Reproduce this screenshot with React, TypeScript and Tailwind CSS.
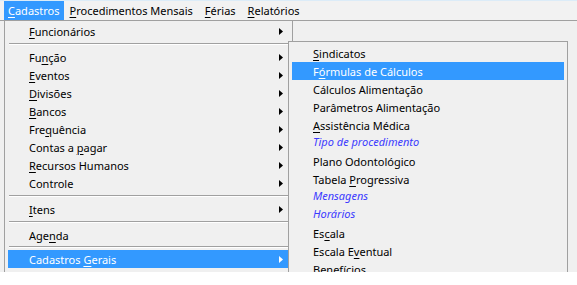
import React from "react";

type Item = {
  label: React.ReactNode;
  sub?: boolean;
  sep?: string;
  active?: boolean;
  italic?: boolean;
};

const font = { fontFamily: '"Noto Sans", "DejaVu Sans", sans-serif' };

function U({ children }: { children: React.ReactNode }) {
  return <span className="underline underline-offset-2">{children}</span>;
}

function Arrow({ white }: { white?: boolean }) {
  return (
    <svg width="4" height="7" viewBox="0 0 4 7" className="ml-auto">
      <path d="M0 0 L4 3.5 L0 7 Z" fill={white ? "#ffffff" : "#000000"} />
    </svg>
  );
}

const mainItems: Item[] = [
  { label: <><U>F</U>uncionários</>, sub: true },
  { sep: "h-[8px]", label: null },
  { label: <>Fu<U>n</U>ção</>, sub: true },
  { label: <><U>E</U>ventos</>, sub: true },
  { label: <><U>D</U>ivisões</>, sub: true },
  { label: <><U>B</U>ancos</>, sub: true },
  { label: <>Fre<U>q</U>uência</>, sub: true },
  { label: <>Contas a <U>p</U>agar</>, sub: true },
  { label: <><U>R</U>ecursos Humanos</>, sub: true },
  { label: <>Controle</>, sub: true },
  { sep: "h-[8px]", label: null },
  { label: <><U>I</U>tens</>, sub: true },
  { sep: "h-[8px]", label: null },
  { label: <>Age<U>n</U>da</> },
  { sep: "h-[6px]", label: null },
  { label: <>Cadastros <U>G</U>erais</>, sub: true, active: true },
];

const subItems: Item[] = [
  { label: <><U>S</U>indicatos</> },
  { label: <>F<U>ó</U>rmulas de Cálculos</>, active: true },
  { label: <>Cálculos Alimentação</> },
  { label: <>Parâmetros Alimentação</> },
  { label: <><U>A</U>ssistência Médica</> },
  { label: <>Tipo de procedimento</>, italic: true },
  { label: <>Plano Odontológico</> },
  { label: <>Tabela <U>P</U>rogressiva</> },
  { label: <>Mensagens</>, italic: true },
  { label: <>Horários</>, italic: true },
  { label: <>Es<U>c</U>ala</> },
  { label: <>Escala E<U>v</U>entual</> },
  { label: <>Benefícios</> },
];

function Row({ item }: { item: Item }) {
  if (item.sep) {
    return (
      <div className={`${item.sep} flex items-center px-[4px]`}>
        <div className="h-[2px] w-full border-t border-[#a0a0a0] border-b-white border-b" />
      </div>
    );
  }
  return (
    <div
      className={`h-[18px] flex items-center mx-[3px] pr-[6px] pl-[21px] ${
        item.active ? "bg-[#3399ff] text-white" : "text-black"
      }`}
    >
      <span className={item.italic ? "italic text-[#3a3aff] -translate-y-[2px]" : ""}>
        {item.label}
      </span>
      {item.sub && <Arrow white={item.active} />}
    </div>
  );
}

export default function App() {
  return (
    <div className="w-[577px] h-[285px] bg-white text-[11px] leading-none" style={font}>
      <div className="relative h-[272px] overflow-hidden">
        <div className="h-[20px] flex items-center bg-[#f2f2f2] border-t border-[#dcecf8] pl-[4px]">
          <div className="h-[19px] flex items-center px-[4px] bg-[#3399ff] text-white">
            <U>C</U>adastros
          </div>
          <div className="px-[6px]"><U>P</U>rocedimentos Mensais</div>
          <div className="px-[6px]"><U>F</U>érias</div>
          <div className="px-[6px]"><U>R</U>elatórios</div>
        </div>
        <div className="h-[252px] bg-[#f0f0f0] border-t border-[#a0a0a0]" />

        <div className="absolute left-[4px] top-[20px] w-[289px] h-[260px] bg-[#f0f0f0] border border-[#a0a0a0] pt-[1px]">
          {mainItems.map((it, i) => (
            <Row key={i} item={it} />
          ))}
        </div>

        <div className="absolute left-[288px] top-[41px] w-[280px] h-[250px] bg-[#f0f0f0] border border-[#a0a0a0] pt-[2px]">
          {subItems.map((it, i) => (
            <Row key={i} item={it} />
          ))}
        </div>
      </div>
    </div>
  );
}
